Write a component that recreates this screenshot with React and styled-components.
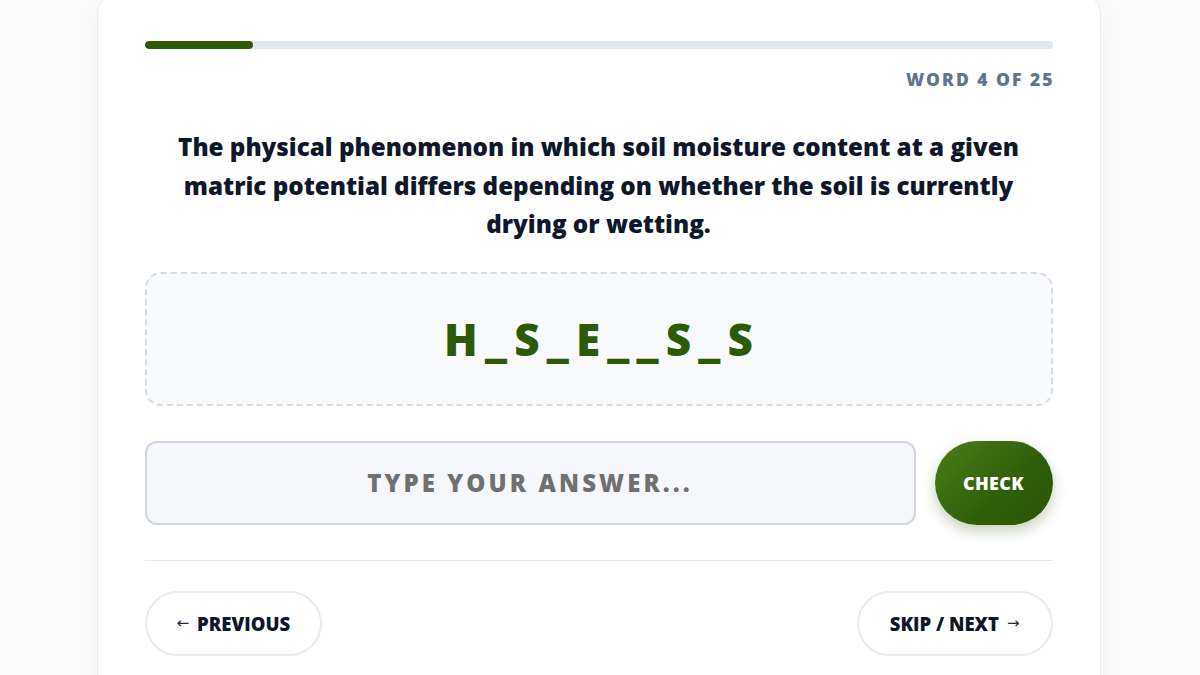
import React from "react";
import styled, { createGlobalStyle } from "styled-components";

const Global = createGlobalStyle`
  html, body { margin: 0; padding: 0; background: #fbfbfb; }
  body { font-family: "Open Sans", "Noto Sans", sans-serif; overflow: hidden; }
  * { box-sizing: border-box; }
`;

const Page = styled.div`
  display: flex;
  justify-content: center;
  height: 675px;
  padding-right: 3px;
`;

const Card = styled.div`
  width: 1004px;
  margin-top: -9px;
  height: 760px;
  background: #ffffff;
  border: 1px solid #ececec;
  border-radius: 24px;
  box-shadow: 0 10px 30px rgba(0, 0, 0, 0.04);
  padding: 49px 47px 48px;
  display: flex;
  flex-direction: column;
`;

const Track = styled.div`
  height: 8px;
  border-radius: 4px;
  background: #e2e8f0;
  overflow: hidden;
`;

const Fill = styled.div`
  height: 100%;
  border-radius: 4px;
  background: #2d5a07;
`;

const Counter = styled.div`
  margin-top: 18px;
  text-align: right;
  font-size: 17.5px;
  font-weight: 800;
  letter-spacing: 2px;
  margin-right: -2px;
  color: #64748b;
  line-height: 24px;
`;

const Question = styled.h2`
  margin: 37px 0 0;
  text-align: center;
  font-size: 24.2px;
  line-height: 38.5px;
  font-weight: 800;
  color: #0f172a;
`;

const HintBox = styled.div`
  margin-top: 28px;
  height: 134px;
  border: 2px dashed #d5dbe3;
  border-radius: 16px;
  background: #f8fafc;
  display: flex;
  align-items: center;
  justify-content: center;
`;

const Hint = styled.div`
  font-size: 44px;
  font-weight: 800;
  letter-spacing: 7.2px;
  margin-right: -7.2px;
  color: #2d5a07;
  line-height: 1;
`;

const AnswerRow = styled.div`
  margin-top: 35px;
  display: flex;
  gap: 19px;
  align-items: stretch;
`;

const Input = styled.input`
  flex: 1;
  height: 84px;
  border: 2px solid #cfd6e0;
  border-radius: 12px;
  background: #f5f7fa;
  text-align: center;
  font-family: "Open Sans", "Noto Sans", sans-serif;
  font-size: 24px;
  font-weight: 800;
  letter-spacing: 3.1px;
  text-transform: uppercase;
  color: #1e293b;
  outline: none;
  &::placeholder {
    color: #707070;
    opacity: 1;
  }
`;

const CheckButton = styled.button`
  width: 118px;
  height: 84px;
  border: none;
  border-radius: 9999px;
  background: linear-gradient(135deg, #4a7f16 0%, #2f5e09 60%, #2b5507 100%);
  box-shadow: 0 6px 14px rgba(45, 90, 7, 0.28);
  color: #ffffff;
  font-family: "Open Sans", "Noto Sans", sans-serif;
  font-size: 18px;
  font-weight: 800;
  letter-spacing: 0.3px;
  cursor: pointer;
`;

const Divider = styled.hr`
  margin: 35px 0 0;
  border: none;
  border-top: 1px solid #e5e9ef;
`;

const NavRow = styled.div`
  margin-top: 30px;
  display: flex;
  justify-content: space-between;
`;

const NavButton = styled.button`
  height: 65px;
  padding: 0 ${(p) => p.$pad}px;
  border: 2px solid #e7eaee;
  border-radius: 9999px;
  background: #ffffff;
  color: #0f172a;
  font-family: "Open Sans", "Noto Sans", sans-serif;
  font-size: 18.5px;
  font-weight: 800;
  display: flex;
  align-items: center;
  gap: 8px;
  cursor: pointer;
`;

const Arrow = styled.span`
  font-family: "DejaVu Sans", sans-serif;
  font-weight: 400;
  font-size: 15px;
  color: #1e293b;
`;

export default function App() {
  const current = 3;
  const total = 25;
  return (
    <>
      <Global />
      <Page>
        <Card>
          <Track>
            <Fill style={{ width: `${(current / total) * 100}%` }} />
          </Track>
          <Counter>WORD 4 OF 25</Counter>
          <Question>
            The physical phenomenon in which soil moisture content at a given matric potential
            differs depending on whether the soil is currently drying or wetting.
          </Question>
          <HintBox>
            <Hint>H_S_E__S_S</Hint>
          </HintBox>
          <AnswerRow>
            <Input placeholder="Type your answer..." />
            <CheckButton>CHECK</CheckButton>
          </AnswerRow>
          <Divider />
          <NavRow>
            <NavButton $pad={30}>
              <Arrow>←</Arrow>PREVIOUS
            </NavButton>
            <NavButton $pad={31}>
              SKIP / NEXT<Arrow>→</Arrow>
            </NavButton>
          </NavRow>
        </Card>
      </Page>
    </>
  );
}
